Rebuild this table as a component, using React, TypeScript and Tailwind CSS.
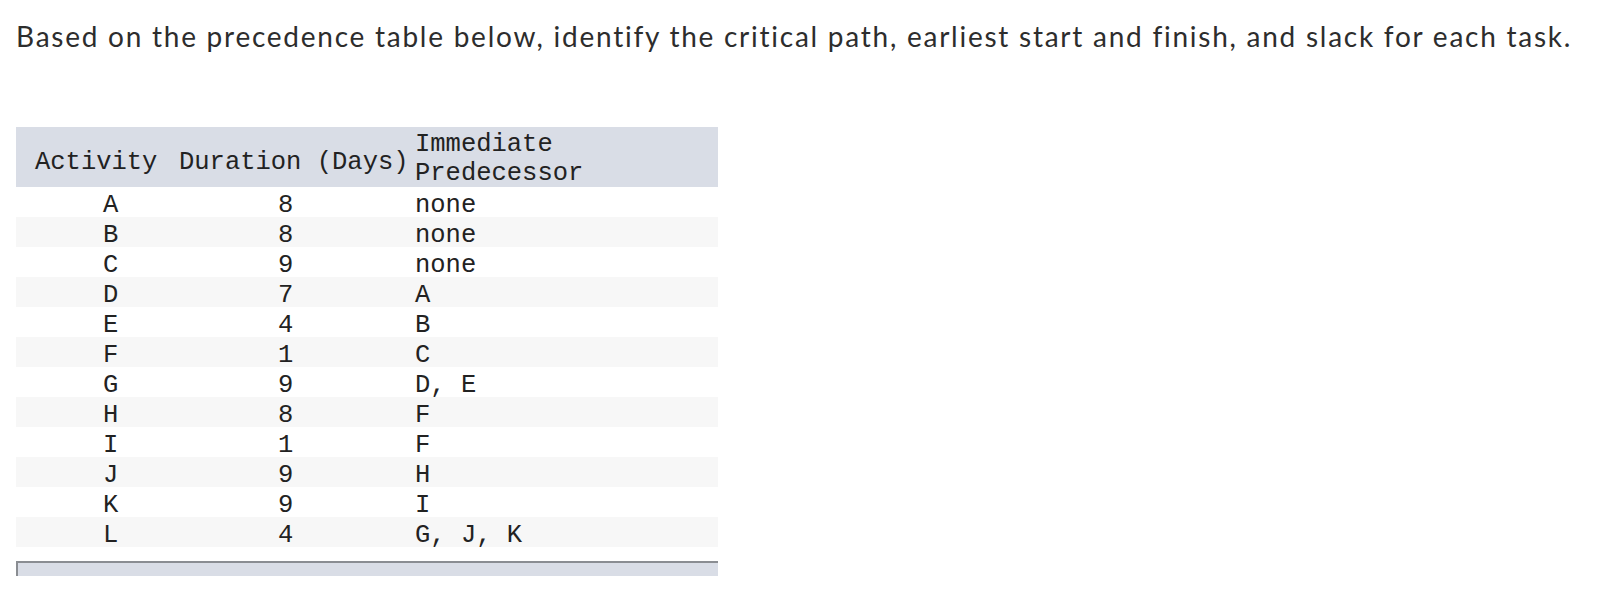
import React from 'react';

const rows: [string, string, string][] = [
  ['A', '8', 'none'],
  ['B', '8', 'none'],
  ['C', '9', 'none'],
  ['D', '7', 'A'],
  ['E', '4', 'B'],
  ['F', '1', 'C'],
  ['G', '9', 'D, E'],
  ['H', '8', 'F'],
  ['I', '1', 'F'],
  ['J', '9', 'H'],
  ['K', '9', 'I'],
  ['L', '4', 'G, J, K'],
];

const mono = "font-['Courier_New','Liberation_Mono',monospace]";

export default function App() {
  return (
    <div className="min-h-screen bg-white px-4 pt-[18px] text-[#2d2d2d]">
      <p className="font-['Lato',sans-serif] text-[28px] leading-[36px] tracking-[1.75px]">
        Based on the precedence table below, identify the critical path, earliest start and finish, and slack for each task.
      </p>

      <div className={`mt-[73px] w-[702px] text-[#222] ${mono} text-[25.5px]`}>
        <div className="grid h-[60px] grid-cols-[154px_242px_306px] bg-[#d9dde6]">
          <div className="flex items-center pl-[19px] pt-[11px]">Activity</div>
          <div className="flex items-center pl-[9px] pt-[11px]">Duration (Days)</div>
          <div className="flex flex-col justify-center pl-[3px] pt-[3px] leading-[29px]">
            <span>Immediate</span>
            <span>Predecessor</span>
          </div>
        </div>
        {rows.map(([activity, duration, pred], i) => (
          <div
            key={activity}
            className={`grid h-[30px] grid-cols-[154px_242px_306px] items-center ${i % 2 === 1 ? 'bg-[#f7f7f7]' : 'bg-white'}`}
          >
            <div className="pl-[87px]">{activity}</div>
            <div className="pl-[108px]">{duration}</div>
            <div className="whitespace-pre pl-[3px]">{pred}</div>
          </div>
        ))}
      </div>

      <div className="mt-[14px] h-[15px] w-[702px] border-l-2 border-t-2 border-[#8a8d92] bg-[#d9dde6]" />
    </div>
  );
}
